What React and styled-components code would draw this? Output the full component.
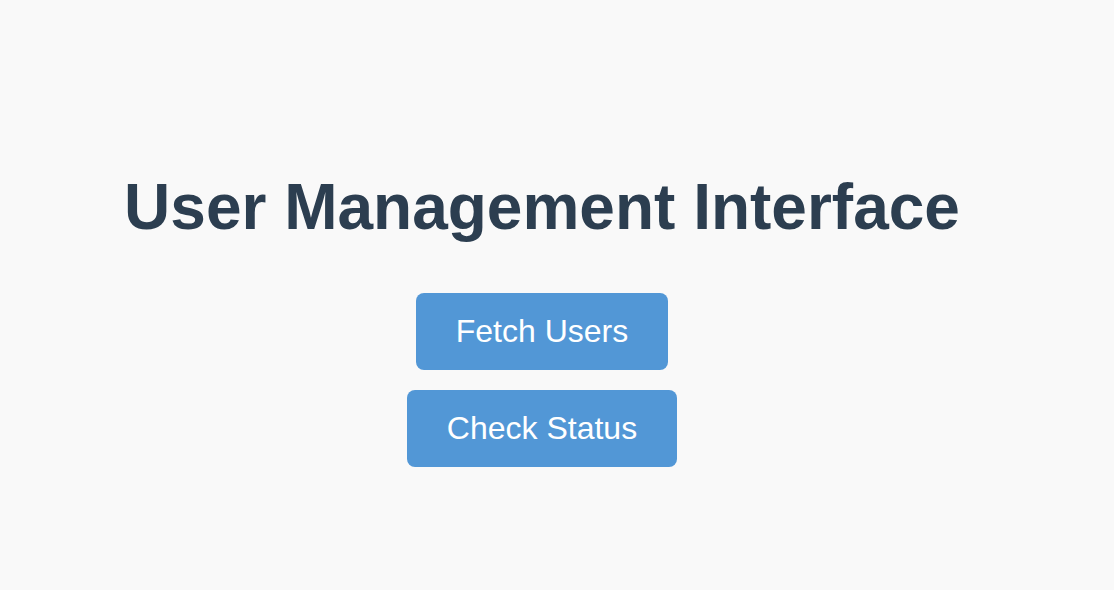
import React from 'react';
import styled, { createGlobalStyle } from 'styled-components';

const GlobalStyle = createGlobalStyle`
  html, body {
    margin: 0;
    padding: 0;
    background-color: #f9f9f9;
    font-family: "Liberation Sans", Arial, sans-serif;
  }
`;

// 页面容器
const Page = styled.div`
  box-sizing: border-box;
  width: 1084px;
  min-height: 590px;
  padding-top: 170px;
  display: flex;
  flex-direction: column;
  align-items: center;
`;

const Title = styled.h1`
  margin: 0 0 49px;
  font-size: 64px;
  line-height: 74px;
  font-weight: 700;
  color: #2c3e50;
`;

const ButtonStack = styled.div`
  display: flex;
  flex-direction: column;
  align-items: center;
  gap: 20px;
`;

const ActionButton = styled.button`
  padding: 20px 40px;
  font-family: "Liberation Sans", Arial, sans-serif;
  font-size: 32px;
  line-height: 36.8px;
  color: #ffffff;
  background-color: #5297d6;
  border: none;
  border-radius: 8px;
  cursor: pointer;
`;

const App = () => {
  return (
    <>
      <GlobalStyle />
      <Page>
        <Title>User Management Interface</Title>
        <ButtonStack>
          <ActionButton>Fetch Users</ActionButton>
          <ActionButton>Check Status</ActionButton>
        </ButtonStack>
      </Page>
    </>
  );
};

export default App;
